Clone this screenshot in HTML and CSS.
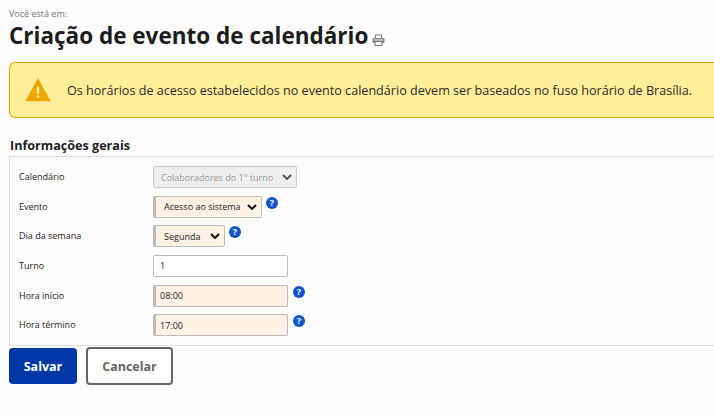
FILE: index.html
```html
<!DOCTYPE html>
<html lang="pt-BR">
<head>
<meta charset="utf-8">
<title>Criação de evento de calendário</title>
<link rel="stylesheet" href="styles.css">
</head>
<body>
<main class="page">
  <p class="crumb">Você está em:</p>
  <div class="heading">
    <h1>Criação de evento de calendário</h1>
    <svg class="printer" width="13" height="12" viewBox="0 0 13 12" aria-hidden="true">
      <path d="M3.5 4V1h6v3" fill="none" stroke="#777" stroke-width="1"/>
      <rect x="0.5" y="4" width="12" height="5" rx="1.2" fill="#888"/>
      <rect x="2" y="5.5" width="9" height="1" fill="#eee"/>
      <rect x="3" y="7.5" width="7" height="4" fill="#fdfdfd" stroke="#777"/>
    </svg>
  </div>
  <div class="alert">
    <svg class="alert-icon" width="26" height="24" viewBox="0 0 26 24" aria-hidden="true">
      <path d="M13 1.5 L24.5 22.5 H1.5 Z" fill="#f0a500" stroke="#f0a500" stroke-width="1.5" stroke-linejoin="round"/>
      <rect x="11.8" y="8.5" width="2.4" height="7.5" rx="1" fill="#fff0b0"/>
      <circle cx="13" cy="18.6" r="1.4" fill="#fff0b0"/>
    </svg>
    <p>Os horários de acesso estabelecidos no evento calendário devem ser baseados no fuso horário de Brasília.</p>
  </div>
  <h2>Informações gerais</h2>
  <form class="panel">
    <div class="row">
      <label>Calendário</label>
      <select class="field select wide" disabled><option>Colaboradores do 1° turno</option></select>
    </div>
    <div class="row">
      <label>Evento</label>
      <select class="field select required medium"><option>Acesso ao sistema</option></select>
      <span class="help">?</span>
    </div>
    <div class="row">
      <label>Dia da semana</label>
      <select class="field select required small"><option>Segunda</option></select>
      <span class="help">?</span>
    </div>
    <div class="row">
      <label>Turno</label>
      <input class="field text" type="text" value="1">
    </div>
    <div class="row">
      <label>Hora início</label>
      <input class="field text required" type="text" value="08:00">
      <span class="help">?</span>
    </div>
    <div class="row">
      <label>Hora término</label>
      <input class="field text required" type="text" value="17:00">
      <span class="help">?</span>
    </div>
  </form>
  <div class="actions">
    <button class="btn primary" type="button">Salvar</button>
    <button class="btn secondary" type="button">Cancelar</button>
  </div>
</main>
</body>
</html>
```

FILE: styles.css
```css
* { box-sizing: border-box; }
html, body { margin: 0; height: 100%; overflow: hidden; }
body {
  background: #fdfdfd;
  color: #222;
  font-family: "Open Sans", sans-serif;
}
.page { padding: 8px 0 0 9px; }
.crumb { margin: 0; font-size: 9px; line-height: 12px; color: #777; }
.heading { display: flex; align-items: flex-end; gap: 4px; height: 30px; margin-top: 1px; }
h1 { margin: 0; font-size: 22.5px; line-height: 30px; font-weight: 700; color: #1c1c1c; }
.printer { margin-bottom: 5px; }
.alert {
  display: flex; align-items: center;
  height: 56px; margin-top: 11px; padding-left: 15px;
  background: #ffee99; border: 1px solid #f0a500; border-right: 0; border-radius: 6px 0 0 6px;
}
.alert-icon { flex: none; margin-right: 16px; }
.alert p { margin: 0; font-size: 12.6px; color: #2b2b2b; white-space: nowrap; }
h2 { margin: 18px 0 0 1px; font-size: 12.6px; line-height: 20px; font-weight: 700; color: #222; }
.panel {
  height: 190px; padding-top: 5px;
  border: 1px solid #ddd; border-right: 0; background: #fdfdfd;
}
.row { display: flex; align-items: flex-start; height: 29.65px; }
.row label { width: 143px; padding: 7px 0 0 9px; font-size: 9px; line-height: 16px; color: #222; flex: none; }
.field {
  height: 22px; font-family: "Open Sans", sans-serif; font-size: 9px; color: #222;
  border: 1px solid #bbb; border-radius: 2px; background-color: #fff; padding: 0 0 0 4px; margin-top: 4px;
}
.select {
  appearance: none;
  background-image: url("data:image/svg+xml,%3Csvg xmlns='http://www.w3.org/2000/svg' width='10' height='6' viewBox='0 0 10 6'%3E%3Cpath d='M1 1l4 4 4-4' fill='none' stroke='%23111' stroke-width='2'/%3E%3C/svg%3E");
  background-repeat: no-repeat;
  background-position: right 4px center;
}
.wide { width: 144px; padding-left: 7px; }
.medium { width: 109px; }
.small { width: 72px; }
.field:disabled {
  background-color: #eee; color: #999; border-color: #ccc; opacity: 1;
  background-image: url("data:image/svg+xml,%3Csvg xmlns='http://www.w3.org/2000/svg' width='10' height='6' viewBox='0 0 10 6'%3E%3Cpath d='M1 1l4 4 4-4' fill='none' stroke='%23555' stroke-width='2'/%3E%3C/svg%3E");
}
.required { background-color: #fff1e4; border-left: 3px solid #bbb; padding-left: 8px; }
.text { width: 135px; padding-left: 6px; color: #222; }
.text.required { padding-left: 4px; }
.help {
  width: 12px; height: 12px; margin: 5px 0 0 4px; border-radius: 50%;
  background: #1155cc; color: #fff; font-size: 9px; line-height: 12px; font-weight: 700; text-align: center; flex: none;
}
.text + .help { margin-left: 5px; }
.actions { display: flex; align-items: center; gap: 9px; margin-top: 1px; }
.btn { font-family: "Open Sans", sans-serif; font-size: 12.5px; font-weight: 700; border-radius: 4px; }
.primary { width: 68px; height: 36px; background: #0039a6; color: #fff; border: 0; }
.secondary { width: 87px; height: 38px; background: #fff; color: #666; border: 2px solid #666; }
```
